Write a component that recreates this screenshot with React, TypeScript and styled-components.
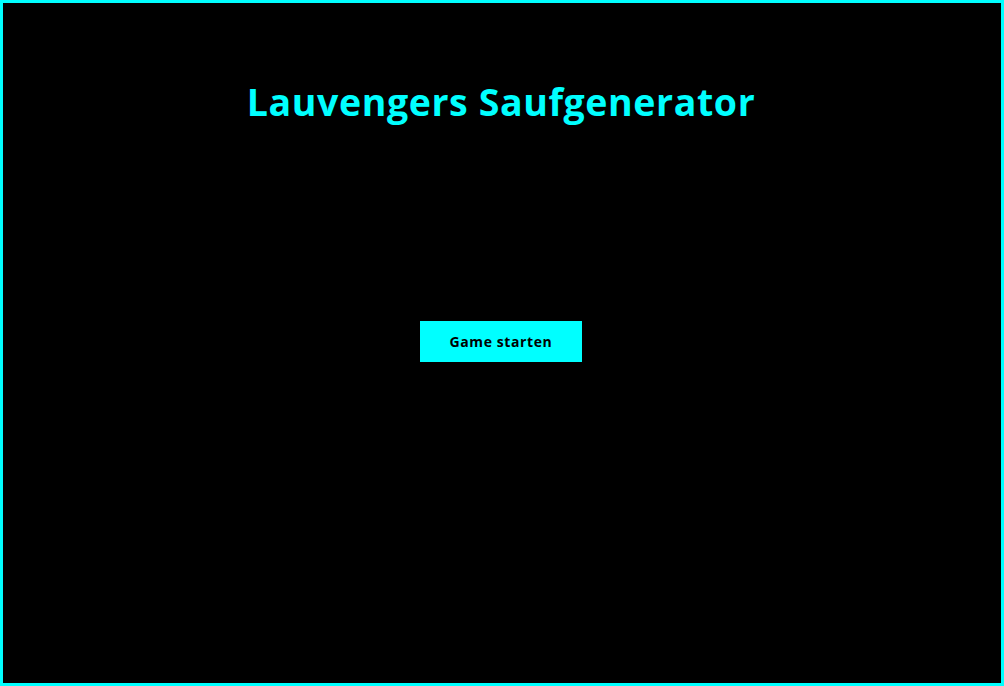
import React from "react";
import styled, { createGlobalStyle } from "styled-components";

const Global = createGlobalStyle`
  html, body { margin: 0; padding: 0; background: #000; }
  * { box-sizing: border-box; }
`;

const Frame = styled.div`
  width: 1004px;
  height: 686px;
  border: 3px solid #00ffff;
  background: #000;
  display: flex;
  flex-direction: column;
  align-items: center;
  font-family: "Open Sans", "Noto Sans", sans-serif;
`;

const Title = styled.h1`
  margin: 73px 0 0 -2px;
  color: #00ffff;
  font-size: 37.5px;
  font-weight: 700;
  letter-spacing: 0.6px;
  line-height: 52px;
`;

const StartButton = styled.button`
  margin: 193px 0 0 -2px;
  width: 162px;
  height: 41px;
  border: none;
  background: #00ffff;
  color: #000;
  font-family: "Open Sans", "Noto Sans", sans-serif;
  font-size: 14px;
  font-weight: 700;
  letter-spacing: 0.6px;
  cursor: pointer;
`;

export default function App() {
  return (
    <>
      <Global />
      <Frame>
        <Title>Lauvengers Saufgenerator</Title>
        <StartButton>Game starten</StartButton>
      </Frame>
    </>
  );
}
